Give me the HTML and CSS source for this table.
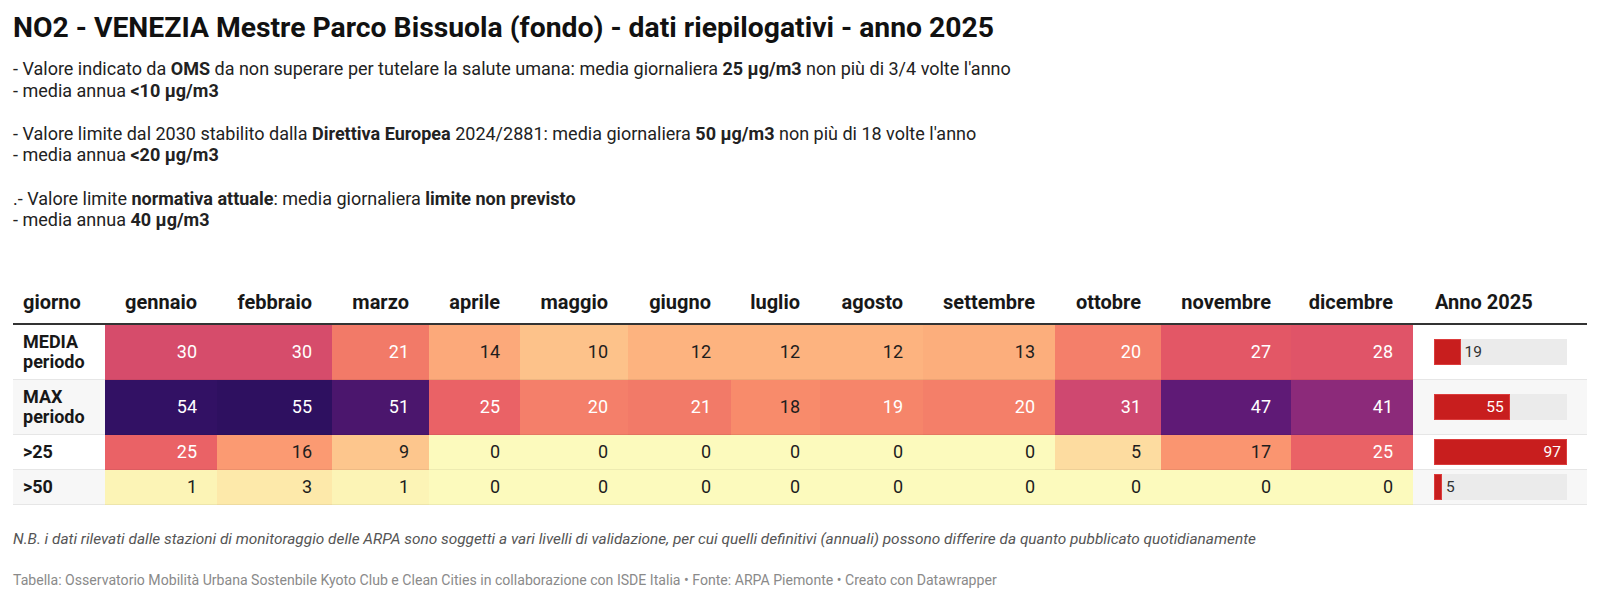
FILE: index.html
```html
<!DOCTYPE html>
<html lang="it">
<head>
<meta charset="utf-8">
<title>NO2 - VENEZIA Mestre Parco Bissuola</title>
<link rel="stylesheet" href="styles.css">
</head>
<body>
<div class="chart">
  <h1 class="title">NO2 - VENEZIA Mestre Parco Bissuola (fondo) - dati riepilogativi - anno 2025</h1>
  <div class="desc">
    - Valore indicato da <b>OMS</b> da non superare per tutelare la salute umana: media giornaliera <b>25 µg/m3</b> non più di 3/4 volte l'anno<br>
    - media annua <b>&lt;10 µg/m3</b><br>
    <br>
    - Valore limite dal 2030 stabilito dalla <b>Direttiva Europea</b> 2024/2881: media giornaliera <b>50 µg/m3</b> non più di 18 volte l'anno<br>
    - media annua <b>&lt;20 µg/m3</b><br>
    <br>
    .- Valore limite <b>normativa attuale</b>: media giornaliera <b>limite non previsto</b><br>
    - media annua <b>40 µg/m3</b>
  </div>

  <table class="tbl">
    <colgroup>
      <col class="w-lbl"><col class="w-gen"><col class="w-feb"><col class="w-mar"><col class="w-apr"><col class="w-mag"><col class="w-giu"><col class="w-lug"><col class="w-ago"><col class="w-set"><col class="w-ott"><col class="w-nov"><col class="w-dic"><col class="w-yr">
    </colgroup>
    <thead>
      <tr>
        <th class="lbl">giorno</th>
        <th>gennaio</th><th>febbraio</th><th>marzo</th><th>aprile</th><th>maggio</th><th>giugno</th><th>luglio</th><th>agosto</th><th>settembre</th><th>ottobre</th><th>novembre</th><th>dicembre</th>
        <th class="yr">Anno 2025</th>
      </tr>
    </thead>
    <tbody>
      <tr>
        <th class="lbl">MEDIA<br>periodo</th>
        <td class="v30 lt">30</td><td class="v30 lt">30</td><td class="v21 lt">21</td><td class="v14">14</td><td class="v10">10</td><td class="v12">12</td><td class="v12">12</td><td class="v12">12</td><td class="v13">13</td><td class="v20 lt">20</td><td class="v27 lt">27</td><td class="v28 lt">28</td>
        <td class="barcell"><div class="track"><div class="bar" style="width:20%"></div><span class="out">19</span></div></td>
      </tr>
      <tr>
        <th class="lbl">MAX<br>periodo</th>
        <td class="v54 lt">54</td><td class="v55 lt">55</td><td class="v51 lt">51</td><td class="v25 lt">25</td><td class="v20 lt">20</td><td class="v21 lt">21</td><td class="v18">18</td><td class="v19 lt">19</td><td class="v20b lt">20</td><td class="v31 lt">31</td><td class="v47 lt">47</td><td class="v41 lt">41</td>
        <td class="barcell"><div class="track"><div class="bar" style="width:57%"><span class="in">55</span></div></div></td>
      </tr>
      <tr>
        <th class="lbl">&gt;25</th>
        <td class="v25 lt">25</td><td class="v16">16</td><td class="v9">9</td><td class="v0">0</td><td class="v0">0</td><td class="v0">0</td><td class="v0">0</td><td class="v0">0</td><td class="v0">0</td><td class="v5">5</td><td class="v17">17</td><td class="v25 lt">25</td>
        <td class="barcell"><div class="track"><div class="bar" style="width:100%"><span class="in">97</span></div></div></td>
      </tr>
      <tr>
        <th class="lbl">&gt;50</th>
        <td class="v1">1</td><td class="v3">3</td><td class="v1">1</td><td class="v0">0</td><td class="v0">0</td><td class="v0">0</td><td class="v0">0</td><td class="v0">0</td><td class="v0">0</td><td class="v0">0</td><td class="v0">0</td><td class="v0">0</td>
        <td class="barcell"><div class="track"><div class="bar" style="width:6%"></div><span class="out">5</span></div></td>
      </tr>
    </tbody>
  </table>

  <p class="note">N.B. i dati rilevati dalle stazioni di monitoraggio delle ARPA sono soggetti a vari livelli di validazione, per cui quelli definitivi (annuali) possono differire da quanto pubblicato quotidianamente</p>
  <p class="footer">Tabella: Osservatorio Mobilità Urbana Sostenbile Kyoto Club e Clean Cities in collaborazione con ISDE Italia • Fonte: ARPA Piemonte • Creato con Datawrapper</p>
</div>
</body>
</html>
```

FILE: styles.css
```css
html, body {
  margin: 0;
  padding: 0;
  background: #ffffff;
}

body {
  font-family: Roboto, "Liberation Sans", Arial, sans-serif;
  color: #1d1d1d;
}

.chart {
  padding: 13px 13px 0 13px;
}

.title {
  margin: 0;
  font-size: 28.3px;
  line-height: 30px;
  font-weight: 700;
  color: #111;
}

.desc {
  margin-top: 15px;
  font-size: 18px;
  line-height: 21.6px;
  color: #222;
}

.desc b {
  font-weight: 700;
}

.tbl {
  margin-top: 50px;
  width: 1574px;
  table-layout: fixed;
  border-collapse: separate;
  border-spacing: 0;
}

.w-lbl { width: 92px; }
.w-gen { width: 112px; }
.w-feb { width: 115px; }
.w-mar { width: 97px; }
.w-apr { width: 91px; }
.w-mag { width: 108px; }
.w-giu { width: 103px; }
.w-lug { width: 89px; }
.w-ago { width: 103px; }
.w-set { width: 132px; }
.w-ott { width: 106px; }
.w-nov { width: 130px; }
.w-dic { width: 122px; }
.w-yr { width: 174px; }

.tbl thead th {
  font-size: 20px;
  font-weight: 700;
  line-height: 22px;
  padding: 10px 20px 10px 0;
  text-align: right;
  color: #181818;
  border-bottom: 2px solid #333;
  white-space: nowrap;
}

.tbl thead th.lbl {
  text-align: left;
  padding-left: 10px;
}

.tbl thead th.yr {
  text-align: left;
  padding-left: 22px;
}

.tbl tbody th.lbl {
  text-align: left;
  font-size: 18px;
  font-weight: 700;
  line-height: 20px;
  padding: 7px 10px 8px 10px;
  color: #181818;
  background: #ffffff;
  box-shadow: inset 0 -1px 0 #e6e6e6;
}

.tbl tbody td {
  font-size: 18px;
  line-height: 20px;
  text-align: right;
  padding: 0 20px 0 0;
  vertical-align: middle;
  color: #1d1d1d;
  box-shadow: inset 0 -1px 0 rgba(0, 0, 0, 0.06);
}

.tbl tbody td.lt {
  color: #ffffff;
}

.tbl tbody tr:nth-child(even) th.lbl,
.tbl tbody tr:nth-child(even) td.barcell {
  background: #f7f7f7;
}

.tbl tbody td.barcell {
  background: #ffffff;
  padding: 0 20px 0 21px;
  text-align: left;
  box-shadow: inset 0 -1px 0 #e6e6e6;
}

.track {
  display: flex;
  align-items: center;
  height: 26px;
  background: #ebebeb;
}

.bar {
  height: 26px;
  box-sizing: border-box;
  background: #c81e1e;
  border: 1px solid #dc3c3c;
  display: flex;
  align-items: center;
  justify-content: flex-end;
}

.track .out,
.bar .in {
  font-size: 15.5px;
  line-height: 20px;
}

.track .out {
  color: #333;
  margin-left: 4px;
}

.bar .in {
  color: #ffffff;
  padding-right: 5px;
}

/* heatmap colours (magma, reversed) */
.v0 { background: #fcfabd; }
.v1 { background: #fcf4b6; }
.v3 { background: #fde9aa; }
.v5 { background: #fddca0; }
.v9 { background: #fdc68d; }
.v10 { background: #fdc28a; }
.v12 { background: #fdb37f; }
.v13 { background: #fcae7c; }
.v14 { background: #fca97a; }
.v16 { background: #fb9a72; }
.v17 { background: #fa9570; }
.v18 { background: #f88b6b; }
.v19 { background: #f6856a; }
.v20 { background: #f47f6a; }
.v20b { background: #f47f69; }
.v21 { background: #f27a68; }
.v25 { background: #ea6266; }
.v27 { background: #e35766; }
.v28 { background: #e05468; }
.v30 { background: #d64c6b; }
.v31 { background: #cf4870; }
.v41 { background: #8c2a7a; }
.v47 { background: #5f1a76; }
.v51 { background: #4b166d; }
.v54 { background: #321164; }
.v55 { background: #2e1060; }

.note {
  margin: 24px 0 0 0;
  font-size: 15.4px;
  line-height: 20px;
  font-style: italic;
  color: #555;
}

.footer {
  margin: 22px 0 0 0;
  font-size: 14.1px;
  line-height: 18px;
  color: #8a8a8a;
}
```
